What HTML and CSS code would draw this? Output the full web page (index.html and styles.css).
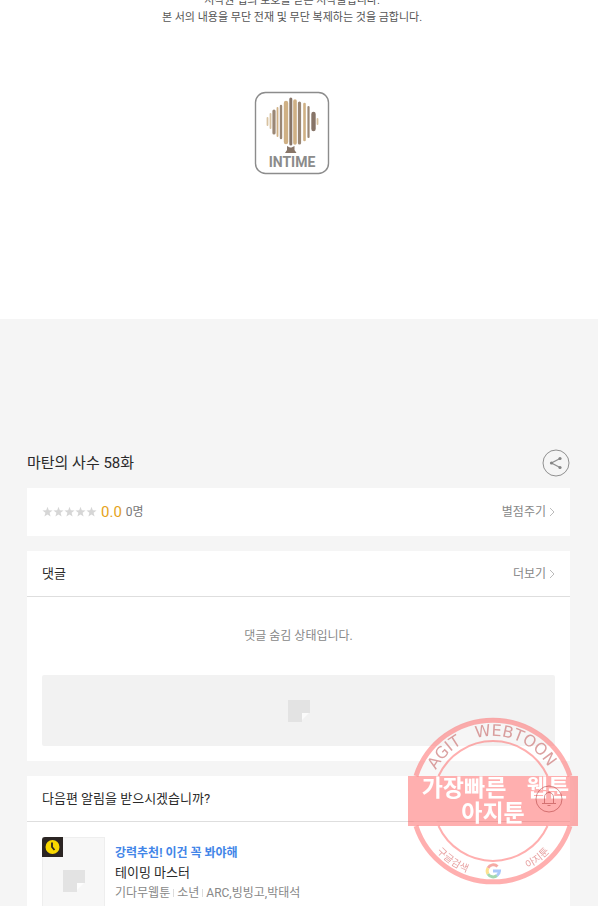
FILE: index.html
```html
<!DOCTYPE html>
<html lang="ko">
<head>
<meta charset="utf-8">
<meta name="viewport" content="width=device-width, initial-scale=1">
<title>마탄의 사수 58화</title>
<link rel="stylesheet" href="styles.css">
</head>
<body>
<section class="viewer">
  <p class="copyright">저작권 법의 보호를 받은 저작물입니다.<br>본 서의 내용을 무단 전재 및 무단 복제하는 것을 금합니다.</p>
  <svg class="publisher" viewBox="0 0 76 84" role="img" aria-label="INTIME">
    <rect x="1.5" y="1.5" width="73" height="81" rx="10" fill="#fff" stroke="#8c8c8c" stroke-width="1.4"/>
    <g stroke-linecap="round" fill="none">
      <path stroke="#d8c2a0" stroke-width="1.800" d="M13.500 27v7M16.500 23v14M63.500 28v5"/>
      <path stroke="#9a8775" stroke-width="3.200" d="M20 20v22M45.500 12v40"/>
      <path stroke="#cfb084" stroke-width="1.800" d="M23.500 17v28"/>
      <path stroke="#9a8775" stroke-width="2.400" d="M27 15v32"/>
      <path stroke="#cfb084" stroke-width="4.400" d="M32 12v39"/>
      <path stroke="#877568" stroke-width="3" d="M36.800 8v45"/>
      <path stroke="#cfb084" stroke-width="3.600" d="M41 10v42"/>
      <path stroke="#cfb084" stroke-width="2.600" d="M50.500 13v36"/>
      <path stroke="#9a8775" stroke-width="2.200" d="M54.500 16v30"/>
      <path stroke="#877568" stroke-width="4.400" d="M59.500 23v15"/>
    </g>
    <path fill="#877568" d="M33 55l3 1.500h1.500l3-1.500v4l2 3H31l2-3z"/>
    <text class="publisher-name" x="38" y="76" text-anchor="middle">INTIME</text>
  </svg>
</section>

<main class="page">
  <header class="episode">
    <h1>마탄의 사수 58화</h1>
    <button class="round" type="button" aria-label="공유">
      <svg viewBox="0 0 28 28"><circle cx="14" cy="14" r="13" fill="none" stroke="#909090"/><path d="M18 9.500 9.500 14l8.500 4.500" fill="none" stroke="#909090" stroke-width="1.300"/><g fill="#858585"><circle cx="18" cy="9.500" r="1.600"/><circle cx="9.500" cy="14" r="1.600"/><circle cx="18" cy="18.500" r="1.600"/></g></svg>
    </button>
  </header>

  <section class="card rating">
    <svg class="stars" viewBox="0 0 55 12" aria-hidden="true">
      <defs><path id="star" d="m5.500.800 1.300 3.500 3.800.200-3 2.300 1 3.700-3.100-2.100-3.100 2.100 1-3.700-3-2.300 3.800-.200z"/></defs>
      <g fill="#d6d6d6"><use href="#star"/><use href="#star" x="11"/><use href="#star" x="22"/><use href="#star" x="33"/><use href="#star" x="44"/></g>
    </svg>
    <strong class="score">0.0</strong>
    <span class="voters">0명</span>
    <a class="more" href="#rate">별점주기<svg viewBox="0 0 6 10"><path d="m1 1 4 4-4 4"/></svg></a>
  </section>

  <section class="card">
    <div class="card-head">
      <h2>댓글</h2>
      <a class="more" href="#comments">더보기<svg viewBox="0 0 6 10"><path d="m1 1 4 4-4 4"/></svg></a>
    </div>
    <p class="hidden-note">댓글 숨김 상태입니다.</p>
    <div class="banner"><svg class="placeholder" viewBox="0 0 22 22"><path fill="#e3e3e3" d="M0 0h22v13h-8v9H0z"/><path fill="#fff" opacity=".7" d="M14 13h7l-7 7z"/></svg></div>
  </section>

  <section class="card">
    <div class="card-head">
      <h2>다음편 알림을 받으시겠습니까?</h2>
      <button class="round bell" type="button" aria-label="알림">
        <svg viewBox="0 0 28 28" fill="none" stroke="#a33" stroke-opacity=".5"><circle cx="14" cy="14" r="13"/><path d="M7 18.500h14M9.500 18v-6a4.500 4.500 0 0 1 9 0v6M14 6v1.500M12.500 20.500h3"/></svg>
      </button>
    </div>
    <a class="work" href="#work">
      <span class="thumb">
        <svg class="placeholder" viewBox="0 0 22 22"><path fill="#e3e3e3" d="M0 0h22v13h-8v9H0z"/><path fill="#fff" opacity=".7" d="M14 13h7l-7 7z"/></svg>
        <svg class="badge" viewBox="0 0 21 20"><path fill="#2b2523" d="M3 0h18v20H0V3a3 3 0 0 1 3-3z"/><circle cx="10.500" cy="10" r="7" fill="#f8d800"/><path d="M10 5.500v4.500l2.500 3" fill="none" stroke="#2b2523" stroke-width="1.800"/></svg>
      </span>
      <span class="info">
        <span class="pick">강력추천! 이건 꼭 봐야해</span>
        <span class="name">테이밍 마스터</span>
        <span class="meta"><span>기다무웹툰</span><span>소년</span><span>ARC,빙빙고,박태석</span></span>
      </span>
    </a>
  </section>
</main>

<svg class="stamp" viewBox="0 0 170 168" role="img" aria-label="아지툰">
  <defs>
    <path id="arc-top" d="M20 84a65 65 0 0 1 130 0"/>
    <path id="arc-bottom" d="M9 84a76 76 0 0 0 152 0"/>
  </defs>
  <path fill="#fff" fill-opacity=".3" fill-rule="evenodd" d="M3 84a82 82 0 0 1 164 0 82 82 0 0 1-164 0zm22 0a60 60 0 0 0 120 0 60 60 0 0 0-120 0z"/>
  <g fill="none" stroke="#f55" stroke-opacity=".47">
    <path stroke-width="5" d="M8 59a81 81 0 0 1 154 0M8 109a81 81 0 0 0 154 0"/>
    <path stroke-width="2" d="M30.500 59a60 60 0 0 1 109 0M30.500 109a60 60 0 0 0 109 0"/>
  </g>
  <rect y="59" width="170" height="50" fill="#f55" fill-opacity=".47"/>
  <g class="ring-latin" text-anchor="middle">
    <text><textPath href="#arc-top" startOffset="25%">AGIT</textPath></text>
    <text><textPath href="#arc-top" startOffset="62%">WEBTOON</textPath></text>
  </g>
  <g class="ring-korean" text-anchor="middle">
    <text><textPath href="#arc-bottom" startOffset="31%">구글검색</textPath></text>
    <text><textPath href="#arc-bottom" startOffset="71%">아지툰</textPath></text>
  </g>
  <g class="slogan" text-anchor="middle">
    <text x="56" y="79">가장빠른</text>
    <text x="140" y="79">웹툰</text>
    <text x="85" y="104">아지툰</text>
  </g>
  <g fill="none" stroke-width="3" opacity=".45">
    <path stroke="#ea4335" d="M80 151a6 6 0 0 1 9.500-1.500"/>
    <path stroke="#fbbc05" d="M80 151a6 6 0 0 0 0 6"/>
    <path stroke="#34a853" d="M80 157a6 6 0 0 0 9 1.500"/>
    <path stroke="#4285f4" d="M85 154h6.500a6 6 0 0 1-2.500 4.500"/>
  </g>
</svg>
</body>
</html>
```
FILE: styles.css
```css
* { box-sizing: border-box; }

body {
  margin: 0;
  background: #f5f5f5;
  color: #2a2a2a;
  font-family: Roboto, "Noto Sans CJK KR", sans-serif;
  font-size: 12px;
  line-height: 18px;
}

h1, h2, p { margin: 0; font-weight: 400; }
h1 { font-size: 15px; line-height: 24px; }
h2 { font-size: 13px; }
a { color: inherit; text-decoration: none; }
svg { display: block; }

.viewer {
  display: flow-root;
  padding-bottom: 144px;
  background: #fff;
  text-align: center;
}

.copyright {
  margin-top: -8px;
  padding-right: 14px;
  color: #555;
  font-size: 11px;
  line-height: 17px;
}

.publisher {
  width: 76px;
  height: 84px;
  margin: 65px auto 0;
  position: relative;
  right: 7px;
}

.publisher-name {
  fill: #8b8b8b;
  font: 700 14px Roboto, sans-serif;
}

.page { padding: 130px 28px 0 27px; }

.episode {
  display: flex;
  align-items: center;
  justify-content: space-between;
  margin-bottom: 11px;
}

.round {
  width: 28px;
  height: 28px;
  padding: 0;
  border: 0;
  background: none;
}

.round svg { width: 28px; height: 28px; }

.card {
  margin-bottom: 15px;
  background: #fff;
}

.rating {
  display: flex;
  align-items: center;
  height: 48px;
  padding: 0 15px;
}

.stars { width: 55px; height: 12px; }

.score {
  margin: 0 4px;
  color: #e5a31a;
  font-size: 15px;
  font-weight: 400;
}

.voters { color: #777; }

.more {
  display: flex;
  align-items: center;
  gap: 3px;
  margin-left: auto;
  color: #888;
}

.more svg {
  width: 6px;
  height: 10px;
  fill: none;
  stroke: #bbb;
}

.card-head {
  display: flex;
  align-items: center;
  height: 46px;
  padding: 0 15px;
  border-bottom: 1px solid #dedede;
}

.bell {
  position: relative;
  z-index: 2;
  margin: 0 -8px 0 auto;
}

.hidden-note {
  padding: 30px 0;
  color: #888;
  text-align: center;
}

.banner {
  display: flex;
  align-items: center;
  justify-content: center;
  height: 71px;
  margin: 0 15px;
  border-radius: 2px;
  background: #f2f2f2;
}

.card:has(.banner) { padding-bottom: 15px; }

.placeholder { width: 22px; height: 22px; }

.work {
  display: flex;
  gap: 10px;
  padding: 15px;
}

.thumb {
  position: relative;
  display: grid;
  place-items: center;
  width: 63px;
  height: 88px;
  border: 1px solid #eee;
  background: #f7f7f7;
}

.badge {
  position: absolute;
  top: -1px;
  left: -1px;
  width: 21px;
  height: 20px;
}

.info { padding-top: 6px; }
.info > span { display: block; line-height: 20px; }
.info > .pick { color: #4285e8; font-weight: 700; }
.info > .name { font-size: 13px; }
.info > .meta { display: flex; align-items: center; color: #888; }

.meta span + span::before {
  content: "";
  display: inline-block;
  width: 1px;
  height: 8px;
  margin: 0 3px;
  background: #ddd;
}

.stamp {
  position: fixed;
  right: 20px;
  bottom: 21px;
  z-index: 1;
  width: 170px;
  height: 168px;
}

.ring-latin {
  fill: #c77;
  fill-opacity: .7;
  font: 16px "DejaVu Sans", sans-serif;
}

.ring-korean {
  fill: #d77;
  fill-opacity: .7;
  font: 10px "Noto Sans CJK KR", sans-serif;
}

.slogan {
  fill: #fff;
  font: 700 23px "Noto Sans CJK KR", sans-serif;
}

@media (max-height: 700px) {
  .stamp { display: none; }
}
```
